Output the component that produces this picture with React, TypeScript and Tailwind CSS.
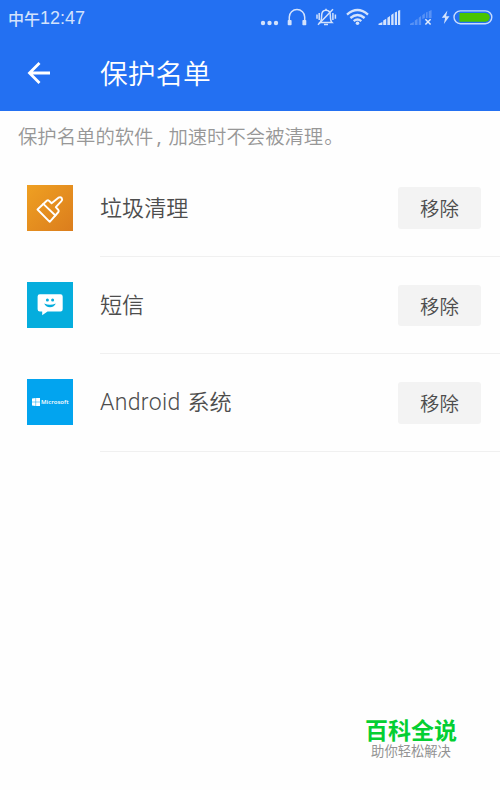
import React from "react";

const BrushIcon = () => (
  <svg viewBox="0 0 46 46" className="block h-[46px] w-[46px]">
    <defs>
      <linearGradient id="orange" x1="0" y1="0" x2="1" y2="1">
        <stop offset="0" stopColor="#efa022" />
        <stop offset="1" stopColor="#db7d1d" />
      </linearGradient>
    </defs>
    <rect width="46" height="46" fill="url(#orange)" />
    <g fill="none" stroke="#fff" strokeWidth="1.9" strokeLinejoin="round" strokeLinecap="round">
      <path d="M10.5 24.5 L20 15.5 Q21.1 14.9 22 15.8 L24.6 18.2 L31.4 12.7 Q33.6 11.7 34.8 13.2 Q35.7 14.8 34.4 16.1 L28.8 22.1 L31.4 25 Q32.2 26 31.4 27 L22.7 36.8 Z" />
      <path d="M16.3 18.9 L28.4 30.5" />
    </g>
  </svg>
);

const MessageIcon = () => (
  <svg viewBox="0 0 46 46" className="block h-[46px] w-[46px]">
    <rect width="46" height="46" fill="#05addd" />
    <path d="M12.8 12.2 H33.5 Q35.7 12.2 35.7 14.4 V27.2 Q35.7 29.4 33.5 29.4 H20.5 L15.2 33.3 V29.4 H12.8 Q10.6 29.4 10.6 27.2 V14.4 Q10.6 12.2 12.8 12.2 Z" fill="#fff" />
    <circle cx="20.4" cy="18" r="1.5" fill="#05addd" />
    <circle cx="25.6" cy="18" r="1.5" fill="#05addd" />
    <path d="M17.2 21.5 Q23 24 28.8 21.5 Q27.3 25.2 23 25.2 Q18.7 25.2 17.2 21.5 Z" fill="#05addd" />
  </svg>
);

const MicrosoftIcon = () => (
  <div className="-mt-[1px] flex h-[46px] w-[46px] items-center bg-[#02a4ef] pl-[4.5px]">
    <svg viewBox="0 0 8 8" className="h-2 w-2 shrink-0" fill="#fff">
      <path d="M0 .4 3.6 0V3.7H0ZM4.1 0H8V3.7H4.1ZM0 4.2H3.6V8L0 7.6ZM4.1 4.2H8V8H4.1Z" />
    </svg>
    <span className="ml-[1.5px] font-['Open_Sans',sans-serif] text-[6px] leading-none font-semibold text-white">Microsoft</span>
  </div>
);

const StatusIcons = () => (
  <svg viewBox="0 0 240 36" className="block h-9 w-[240px]" fill="#d3e2fc">
    <circle cx="3" cy="23" r="2.2" />
    <circle cx="9.5" cy="23" r="2.2" />
    <circle cx="16" cy="23" r="2.2" />
    <path d="M29.3 21 V17 A7.7 7.5 0 0 1 44.7 17 V21" fill="none" stroke="#d3e2fc" strokeWidth="1.5" />
    <rect x="27.7" y="20" width="3.9" height="5.2" rx=".8" />
    <rect x="42.4" y="20" width="3.9" height="5.2" rx=".8" />
    <g fill="none" stroke="#d3e2fc" strokeWidth="1.5">
      <path d="M60 22.5 Q61.6 21 61.6 16 Q61.6 10.3 66 10.3 Q70.4 10.3 70.4 16 Q70.4 21 72 22.5 Z" />
      <path d="M66 8.8V10.3M64 24.6H68M58 24.7 L73 9.2M59.2 13V20M57 14.5V18.8M72.9 13V20M75.4 14.5V18.8" />
    </g>
    <g fill="none" stroke="#d3e2fc" strokeWidth="2.4">
      <path d="M87 14.6 Q97.5 5.6 108 14.6" />
      <path d="M90.4 18 Q97.5 12 104.6 18" />
      <path d="M93.7 21.2 Q97.5 18 101.3 21.2" />
    </g>
    <circle cx="97.5" cy="23.3" r="1.8" />
    <path d="M118.5 25V23.8L122.4 21.9V25ZM123.2 25V20.6L126.2 18.8V25ZM127.4 25V17.8L130 15.9V25ZM131.2 25V15L133.6 13.3V25ZM134.8 25V12.5L137 11.4V25ZM138 25V10.8L140.2 10V25Z" />
    <path d="M150 25V23.8L153.8 22V25ZM154.8 25V20.5L157.5 18.8V25ZM158.7 25V17.8L161.1 16V25ZM162.3 19V15.2L164.8 13.3V18ZM166 18V12.5L167.6 11.7V18ZM168.7 18V11.3L171.6 10V18Z" opacity=".3" />
    <path d="M165.4 19.2 170.6 24.6M170.6 19.2 165.4 24.6" stroke="#e1ebfd" strokeWidth="1.5" />
    <path d="M187.4 10.5 181.8 17.7H185.1L183.9 24 189.5 16.3H186.1Z" />
    <rect x="194" y="10.9" width="37.8" height="12.8" rx="6.4" fill="none" stroke="#c7dbff" strokeWidth="1.4" />
    <path d="M199.5 13H225.5Q229.7 13.5 229.7 17.3Q229.7 21.2 225.5 21.7H199.5Z" fill="#49c400" />
  </svg>
);

const apps = [
  { name: <>垃圾清理</>, icon: <BrushIcon />, nameClass: "pb-[3px]" },
  { name: <>短信</>, icon: <MessageIcon />, nameClass: "pb-[3px]" },
  {
    name: (
      <>
        <span className="inline-block w-[87.5px] font-['Roboto',sans-serif] text-[23px] font-[350] tracking-[0.35px]">Android</span>系统
      </>
    ),
    icon: <MicrosoftIcon />,
    nameClass: "pb-[1px]",
  },
];

export default function App() {
  return (
    <div className="flex h-[790px] w-[500px] flex-col overflow-hidden bg-[#fefefe] font-['Noto_Sans_CJK_SC',sans-serif]">
      <header className="h-[111px] shrink-0 bg-[#2370f2]">
        <div className="flex h-9 items-center justify-between pl-2">
          <div className="flex items-center whitespace-nowrap text-[16px] leading-[34px] font-medium text-[#d3e2fc]">
            <span className="pb-[1px]">中午</span>
            <span className="font-['Liberation_Sans',sans-serif] text-[18px] font-normal">12:47</span>
          </div>
          <StatusIcons />
        </div>
        <div className="flex h-[74px] items-center pl-[27px]">
          <svg viewBox="0 0 24 24" className="h-6 w-6 shrink-0" fill="none" stroke="#fff" strokeWidth="2.8">
            <path d="M12.5 2 2.5 12 12.5 22M2.5 12H23" />
          </svg>
          <h1 className="ml-[49px] text-[27.7px] leading-none font-[350] text-white">保护名单</h1>
        </div>
      </header>
      <p className="flex h-[48px] shrink-0 items-center pt-[3px] pl-[18px] text-[19.35px] leading-[45px] font-[350] whitespace-nowrap text-[#979797]">
        <span>保护名单的软件</span>
        <span className="w-[15px] pl-[3px] font-['Noto_Sans',sans-serif] font-normal">,</span>
        <span>加速时不会被清理</span>
        <span className="pl-[1px]">。</span>
      </p>
      <ul>
        {apps.map((app, i) => (
          <li key={i} className="flex h-[97.5px] pl-[27px]">
            <div className="flex items-center">{app.icon}</div>
            <div className="ml-[27px] flex flex-1 items-center justify-between border-b border-[#f0f0f0] pr-[19px]">
              <span className={`whitespace-nowrap text-[22.1px] leading-none font-[350] text-[#4d4d4d] ${app.nameClass}`}>{app.name}</span>
              <button className="mt-[1px] h-[41.5px] w-[83px] rounded-[3px] bg-[#f3f3f3] text-[19.4px] leading-none font-[350] text-[#4d4d4d]">移除</button>
            </div>
          </li>
        ))}
      </ul>
      <footer className="mt-auto mb-[30.5px] ml-[365px] flex w-[92px] flex-col items-center whitespace-nowrap font-['Liberation_Sans','Noto_Sans_CJK_SC',sans-serif]">
        <strong className="text-[23px] leading-[26px] font-bold text-[#04cf32]">百科全说</strong>
        <span className="text-[13.3px] leading-[16px] text-[#929292]">助你轻松解决</span>
      </footer>
    </div>
  );
}
